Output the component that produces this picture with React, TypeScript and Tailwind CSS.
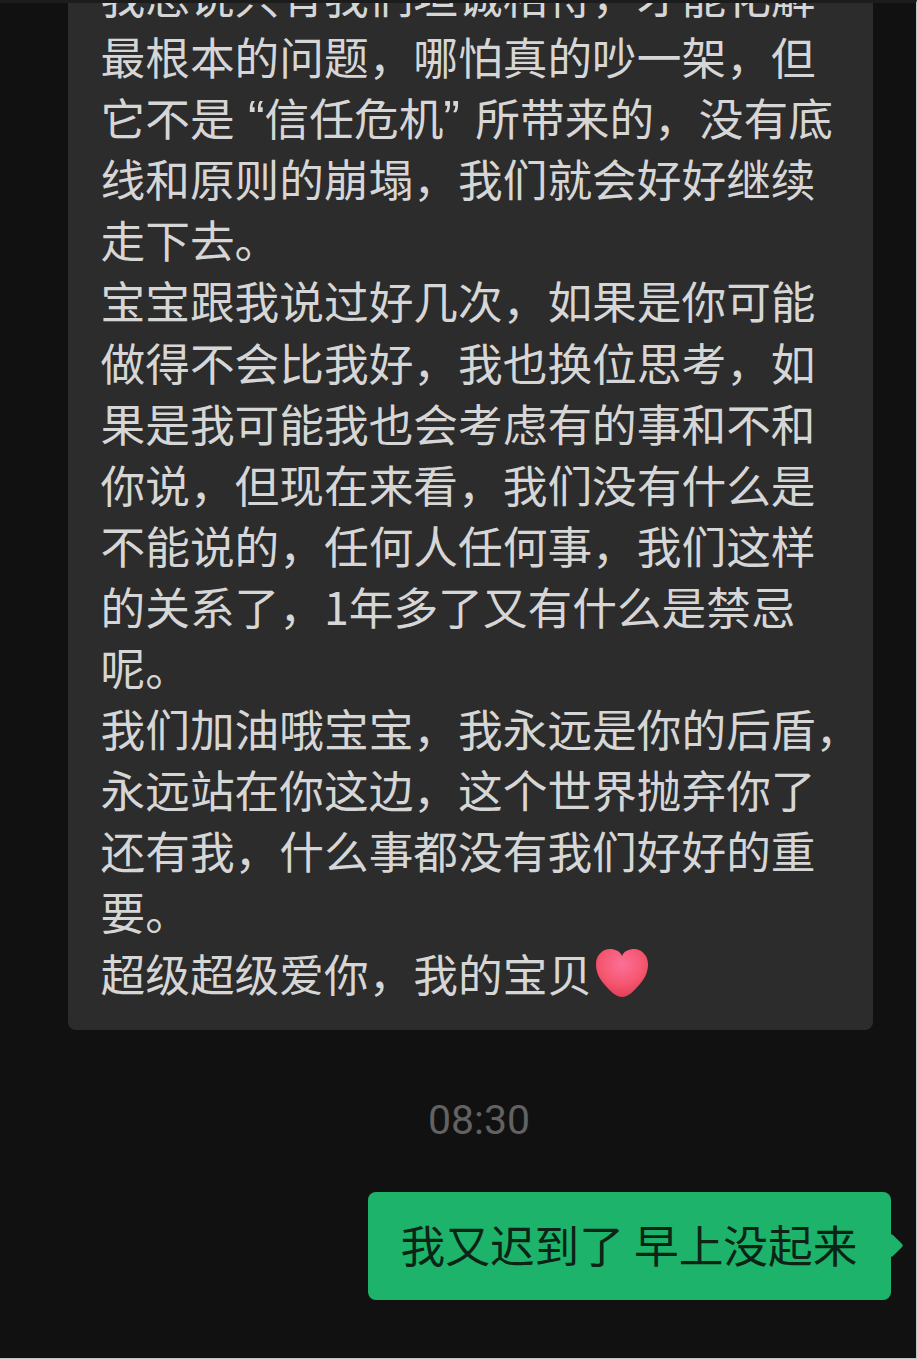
const lines = [
  "我总说只有我们坦诚相待，才能化解",
  "最根本的问题，哪怕真的吵一架，但",
  "QUOTE",
  "线和原则的崩塌，我们就会好好继续",
  "走下去。",
  "宝宝跟我说过好几次，如果是你可能",
  "做得不会比我好，我也换位思考，如",
  "果是我可能我也会考虑有的事和不和",
  "你说，但现在来看，我们没有什么是",
  "不能说的，任何人任何事，我们这样",
  "的关系了，1年多了又有什么是禁忌",
  "呢。",
  "我们加油哦宝宝，我永远是你的后盾，",
  "永远站在你这边，这个世界抛弃你了",
  "还有我，什么事都没有我们好好的重",
  "要。",
];

function Heart() {
  return (
    <svg width="54" height="50" viewBox="0 0 54 50" className="ml-[3px] mt-[1px] shrink-0" aria-hidden="true">
      <defs>
        <radialGradient id="heartFill" cx="0.5" cy="0.32" r="0.72">
          <stop offset="0" stopColor="#fb7098" />
          <stop offset="0.6" stopColor="#f5566e" />
          <stop offset="1" stopColor="#d93a56" />
        </radialGradient>
      </defs>
      <path
        d="M27 49C21 49 15 43 9 36C4 30 1 24 1 16C1 7 8 1 15 1C20 1 25 3 27 8C29 3 34 1 39 1C46 1 53 7 53 16C53 24 50 30 45 36C39 43 33 49 27 49Z"
        fill="url(#heartFill)"
      />
    </svg>
  );
}

export default function App() {
  return (
    <div
      className="h-[1359px] w-[917px] overflow-hidden border-t-[3px] border-r border-b border-t-[#1c1c1c] border-r-[#c4c4c4] border-b-[#c4c4c4] bg-[#111112]"
      style={{ fontFamily: '"Noto Sans CJK SC", "Noto Sans", sans-serif' }}
    >
      <div className="-mt-[39px] ml-[68px] w-[805px] rounded-b-lg bg-[#2c2c2c] pb-[27px] pl-[32.5px] text-[44.7px] leading-[61.1px] text-[#d6d6d6]">
        {lines.map((line, i) =>
          line === "QUOTE" ? (
            <div key={i} className="h-[61.1px] whitespace-nowrap">
              它不是
              <span className="inline-block w-[30px] text-right font-['Liberation_Sans'] text-[50px] leading-none">“</span>
              信任危机
              <span className="inline-block w-[32px] text-left font-['Liberation_Sans'] text-[50px] leading-none">”</span>
              所带来的，没有底
            </div>
          ) : (
            <div key={i} className="h-[61.1px] whitespace-nowrap">
              {line}
            </div>
          )
        )}
        <div className="flex h-[61.1px] items-center whitespace-nowrap">
          超级超级爱你，我的宝贝
          <Heart />
        </div>
      </div>

      <p className="mt-[66px] ml-[42px] text-center font-['Roboto'] text-[41px] leading-[48px] text-[#626262]">08:30</p>

      <div className="mt-[48px] mr-[25px] flex justify-end">
        <div className="relative flex h-[108px] w-[523px] items-center rounded-lg bg-[#1eb36a] pb-[4px] pl-[32.5px] text-[44.7px] whitespace-nowrap text-[#0c2415]">
          我又迟到了 早上没起来
          <span className="absolute top-[45.5px] -right-[8.5px] size-[17px] rotate-45 rounded-[2px] bg-[#1eb36a]" />
        </div>
      </div>
    </div>
  );
}
